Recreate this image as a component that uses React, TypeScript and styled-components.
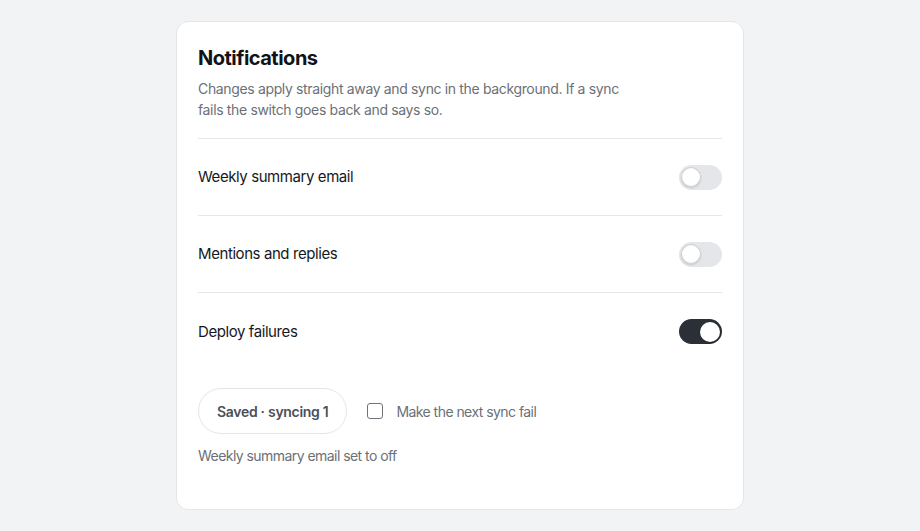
import React, { useState } from "react";
import styled, { createGlobalStyle } from "styled-components";

const Global = createGlobalStyle`
  html, body { margin: 0; padding: 0; background: #f2f3f5; }
  body { font-family: Inter, "Noto Sans", "Liberation Sans", sans-serif; -webkit-font-smoothing: antialiased; }
  * { box-sizing: border-box; }
`;

const Page = styled.div`
  display: flex;
  justify-content: center;
  padding-top: 21px;
  min-height: 531px;
`;

const Card = styled.section`
  width: 568px;
  height: 489px;
  background: #ffffff;
  border: 1px solid #e3e5e9;
  border-radius: 12px;
  padding: 22px 21px 0 21px;
  display: flex;
  flex-direction: column;
`;

const Header = styled.header`
  padding-bottom: 18px;
  border-bottom: 1px solid #e5e7eb;
`;

const Title = styled.h2`
  margin: 0;
  font-size: 20px;
  line-height: 28px;
  font-weight: 700;
  color: #111318;
  letter-spacing: -0.5px;
`;

const Description = styled.p`
  margin: 6px 0 0 0;
  font-size: 14px;
  line-height: 21px;
  color: #6b7078;
  max-width: 440px;
  letter-spacing: -0.35px;
`;

const Row = styled.div<{ $last?: boolean }>`
  display: flex;
  align-items: center;
  justify-content: space-between;
  height: 77px;
  border-bottom: ${(p) => (p.$last ? "none" : "1px solid #e5e7eb")};
`;

const Label = styled.span`
  font-size: 15px;
  line-height: 24px;
  color: #16181d;
  letter-spacing: -0.42px;
`;

const Track = styled.button<{ $on: boolean }>`
  position: relative;
  width: 43px;
  height: 25px;
  border: none;
  border-radius: 13px;
  padding: 0;
  cursor: pointer;
  background: ${(p) => (p.$on ? "#2b2f36" : "#e4e6ea")};
`;

const Knob = styled.span<{ $on: boolean }>`
  position: absolute;
  top: 2.5px;
  left: ${(p) => (p.$on ? "21px" : "2px")};
  width: 20px;
  height: 20px;
  border-radius: 50%;
  background: #ffffff;
  box-shadow: ${(p) =>
    p.$on ? "0 1px 2px rgba(0,0,0,0.2)" : "inset 0 0 0 1px #c9ccd1, 0 1px 2px rgba(0,0,0,0.15)"};
`;

const Footer = styled.div`
  display: flex;
  align-items: center;
  gap: 20px;
  margin-top: 18px;
`;

const StatusPill = styled.button`
  height: 46px;
  padding: 0 18px;
  border-radius: 23px;
  border: 1px solid #e3e5e9;
  background: #ffffff;
  font-family: inherit;
  font-size: 14px;
  font-weight: 600;
  color: #4b5059;
  letter-spacing: -0.3px;
`;

const CheckLabel = styled.label`
  display: flex;
  align-items: center;
  gap: 13px;
  font-size: 14px;
  color: #6b7078;
  cursor: pointer;
  letter-spacing: -0.55px;
`;

const Box = styled.span`
  width: 16px;
  height: 16px;
  border: 1.5px solid #6f737a;
  border-radius: 3px;
  background: #fff;
`;

const Status = styled.p`
  margin: 11px 0 0 0;
  font-size: 14px;
  line-height: 21px;
  color: #6b7078;
  letter-spacing: -0.55px;
`;

type Item = { id: string; label: string; on: boolean };

export default function App() {
  const [items, setItems] = useState<Item[]>([
    { id: "weekly", label: "Weekly summary email", on: false },
    { id: "mentions", label: "Mentions and replies", on: false },
    { id: "deploy", label: "Deploy failures", on: true },
  ]);
  const toggle = (id: string) =>
    setItems((xs) => xs.map((x) => (x.id === id ? { ...x, on: !x.on } : x)));

  return (
    <>
      <Global />
      <Page>
        <Card>
          <Header>
            <Title>Notifications</Title>
            <Description>
              Changes apply straight away and sync in the background. If a sync fails the switch goes back and says so.
            </Description>
          </Header>
          {items.map((it, i) => (
            <Row key={it.id} $last={i === items.length - 1}>
              <Label>{it.label}</Label>
              <Track $on={it.on} onClick={() => toggle(it.id)} aria-pressed={it.on}>
                <Knob $on={it.on} />
              </Track>
            </Row>
          ))}
          <Footer>
            <StatusPill>Saved · syncing 1</StatusPill>
            <CheckLabel>
              <Box />
              Make the next sync fail
            </CheckLabel>
          </Footer>
          <Status>Weekly summary email set to off</Status>
        </Card>
      </Page>
    </>
  );
}
